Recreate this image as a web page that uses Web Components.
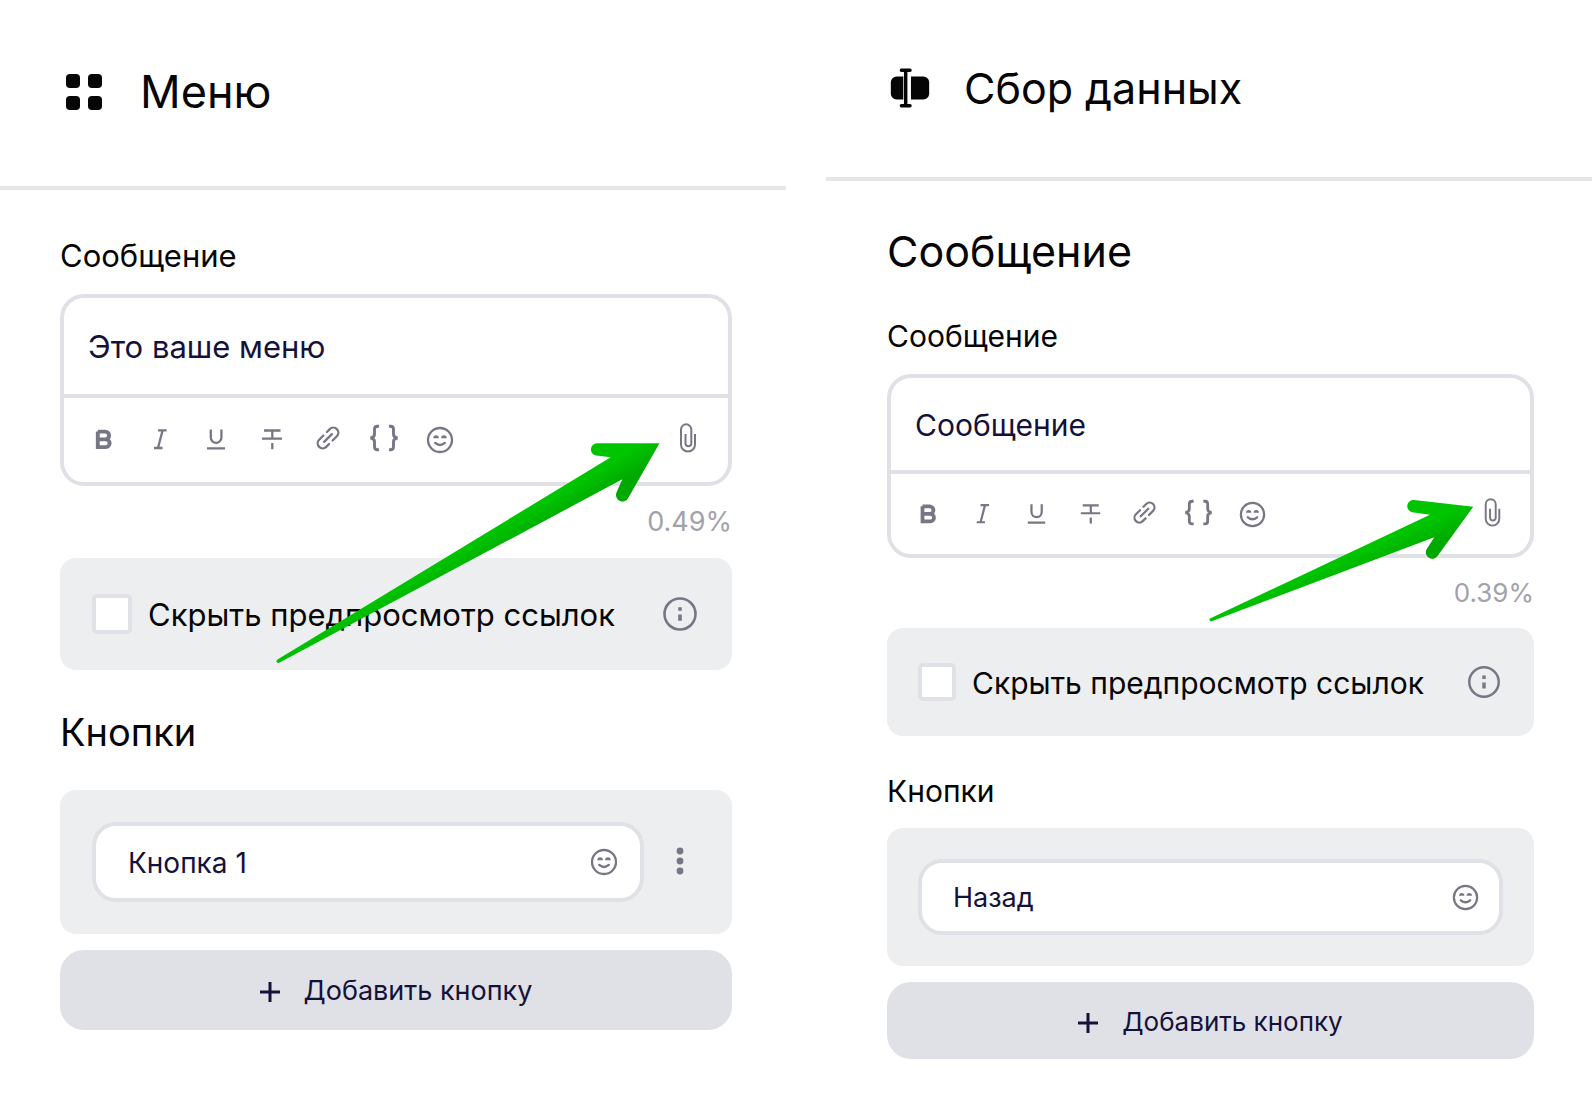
<!DOCTYPE html>
<html lang="ru">
<head>
<meta charset="utf-8">
<title>Редактор блоков</title>
<style>
    body {
        margin: 0;
        background: #fff;
        color: #050505;
        font-family: Inter, "Liberation Sans", sans-serif;
    }
    main {
        display: grid;
        grid-template-columns: 786fr 766fr;
        gap: 40px;
        align-items: start;
    }
    block-panel {
        --ink: #14123a;
        --muted: #777684;
        --line: #e0e1e6;
        --card: #edeef0;
    }
    .menu {
        --header: 186px;
        --title: 45px;
        --icon: 48px;
        --icon-gap: 32px;
        --pad: 46px 54px 68px 60px;
        --pad-left: 60px;
        --label: 31px;
        --label-line: 40px;
        --label-gap: 18px;
        --small: 27px;
        --small-line: 36px;
        --entry: 28px;
        --text-row: 96px;
        --tool-row: 84px;
        --tool: 32px;
        --tool-gap: 24px;
        --tool-pad: 24px;
        --check-card: 112px;
        --box: 40px;
        --card-pad: 32px;
        --field: 80px;
        --field-pad: 20px;
        --button: 80px;
    }
    .collect {
        --header: 177px;
        --title: 43px;
        --icon: 46px;
        --icon-gap: 31px;
        --pad: 42px 58px 39px 61px;
        --pad-left: 61px;
        --label: 30px;
        --label-line: 38px;
        --label-gap: 19px;
        --small: 26px;
        --small-line: 34px;
        --entry: 27px;
        --text-row: 92px;
        --tool-row: 80px;
        --tool: 31px;
        --tool-gap: 23px;
        --tool-pad: 22px;
        --check-card: 108px;
        --box: 38px;
        --card-pad: 31px;
        --field: 76px;
        --field-pad: 18px;
        --button: 77px;
    }
    h2, h3 {
        margin: 0;
        font-weight: 400;
    }
    .menu h2 {
        margin: 38px 0 34px;
        font-size: 38px;
        line-height: 48px;
    }
    .collect h2 {
        margin-bottom: 38px;
        font-size: 43px;
        line-height: 56px;
    }
    .collect h3 {
        margin: 36px 0 18px;
        font-size: 30px;
        line-height: 38px;
    }
    add-button {
        margin-top: 16px;
    }
    .menu pointer-arrow {
        position: absolute;
        top: 132px;
        right: 58px;
    }
    .collect pointer-arrow {
        position: absolute;
        top: 112px;
        right: 44px;
    }
</style>
</head>
<body>
<main>
    <block-panel class="menu" heading="Меню" icon="grid">
        <message-editor label="Сообщение" text="Это ваше меню" percent="0.49%">
            <pointer-arrow shape="long"></pointer-arrow>
        </message-editor>
        <preview-toggle>Скрыть предпросмотр ссылок</preview-toggle>
        <h2>Кнопки</h2>
        <button-field value="Кнопка 1" menu></button-field>
        <add-button>Добавить кнопку</add-button>
    </block-panel>

    <block-panel class="collect" heading="Сбор данных" icon="input">
        <h2>Сообщение</h2>
        <message-editor label="Сообщение" text="Сообщение" percent="0.39%">
            <pointer-arrow shape="short"></pointer-arrow>
        </message-editor>
        <preview-toggle>Скрыть предпросмотр ссылок</preview-toggle>
        <h3>Кнопки</h3>
        <button-field value="Назад"></button-field>
        <add-button>Добавить кнопку</add-button>
    </block-panel>
</main>

<script>
const ICONS = {
    grid: `<g fill="currentColor"><rect x="6" y="6" width="14" height="14" rx="4"/><rect x="28" y="6" width="14" height="14" rx="4"/><rect x="6" y="28" width="14" height="14" rx="4"/><rect x="28" y="28" width="14" height="14" rx="4"/></g>`,
    input: `<path d="M15 5.500h9M15 42.500h9M19.500 5.500v37" stroke="currentColor" stroke-width="3.600" stroke-linecap="round" fill="none"/><path d="M17 12h-7a6 6 0 0 0-6 6v12a6 6 0 0 0 6 6h7zM25 12h13a6 6 0 0 1 6 6v12a6 6 0 0 1-6 6H25z" fill="currentColor"/>`,
    bold: `<path d="M9.800 7.600h7.400a3.900 3.900 0 0 1 0 7.800H9.800M9.800 15.400h8a3.850 3.850 0 0 1 0 7.700h-8V7.600" stroke-width="3.900"/>`,
    italic: `<path d="M14 6.300h8.700M10 24h8.500M18.600 6.300L14 24"/>`,
    underline: `<path d="M10.800 5.500v8a5.200 5.200 0 0 0 10.600 0v-8M7 24.300h18"/>`,
    strike: `<path d="M8 6.500h16.500M6 14.700h20M16.300 6.500v8M16.300 19v6.300"/>`,
    link: `<g transform="translate(16 14) rotate(-45)" stroke-linecap="round"><path d="M-1.500-5h-6a5 5 0 0 0 0 10h4M1.500 5h6a5 5 0 0 0 0-10h-4M-5.500 0h11"/></g>`,
    braces: `<path d="M11 2.300H9.500q-3 0-3 3v5q0 3-4 3.700q4 .7 4 3.700v5q0 3 3 3H11M21 2.300h1.500q3 0 3 3v5q0 3 4 3.700q-4 .7-4 3.700v5q0 3-3 3H21" stroke-width="2.900"/>`,
    smile: `<circle cx="16" cy="16" r="12"/><path d="M11.200 18.900q4.800 4 9.600 0" stroke-linecap="round" stroke-width="2.400"/><path d="M9.300 14.300a2.800 3 0 0 1 5.600 0zM17.100 14.300a2.800 3 0 0 1 5.600 0z" fill="currentColor" stroke="none"/>`,
    clip: `<path d="M23 10v10.500a7 7 0 0 1-14 0V5.500a5.150 5.150 0 0 1 10.300 0V20a3 3 0 0 1-5.800 0V10" stroke-width="2"/>`,
    info: `<circle cx="20" cy="20" r="15.500" stroke-width="2.600"/><path d="M18.200 13.200h3.600v3.600h-3.600zM18.200 20.400h3.600v6.400h-3.600z" fill="currentColor" stroke="none"/>`,
    dots: `<g fill="currentColor" stroke="none"><circle cx="20" cy="9" r="3.400"/><circle cx="20" cy="19" r="3.400"/><circle cx="20" cy="29" r="3.400"/></g>`,
    plus: `<path d="M10 0v20M0 10h20" stroke-width="3"/>`
};

function icon(name, size = 32) {
    return `<svg viewBox="0 0 ${size} ${size}" fill="none" stroke="currentColor" stroke-width="2.300" overflow="visible" aria-hidden="true">${ICONS[name]}</svg>`;
}

const BASE = `
    * { box-sizing: border-box; }
    :host { display: block; }
    svg { display: block; width: 100%; height: 100%; }
    button { padding: 0; border: 0; background: none; font: inherit; color: inherit; cursor: pointer; flex: none; }
    input, textarea { margin: 0; font: inherit; color: inherit; outline: none; }
`;

class BlockPanel extends HTMLElement {
    constructor() {
        super();
        this.attachShadow({ mode: 'open' });
    }

    connectedCallback() {
        this.shadowRoot.innerHTML = `
        <style>
            ${BASE}
            :host { min-width: 0; }
            header {
                display: flex;
                align-items: center;
                gap: var(--icon-gap);
                height: calc(var(--header) + 4px);
                padding: 0 0 2px var(--pad-left);
                border-bottom: 4px solid #e6e6e8;
            }
            .icon {
                width: var(--icon);
                height: var(--icon);
                flex: none;
            }
            .icon svg { stroke: none; }
            h1 {
                margin: 0;
                font-size: var(--title);
                font-weight: 400;
                line-height: 56px;
            }
            section { padding: var(--pad); }
        </style>
        <header>
            <span class="icon">${icon(this.getAttribute('icon'), 48)}</span>
            <h1>${this.getAttribute('heading')}</h1>
        </header>
        <section><slot></slot></section>
        `;
    }
}
customElements.define('block-panel', BlockPanel);

class MessageEditor extends HTMLElement {
    constructor() {
        super();
        this.attachShadow({ mode: 'open' });
    }

    connectedCallback() {
        const tools = [
            ['bold', 'Жирный'],
            ['italic', 'Курсив'],
            ['underline', 'Подчёркнутый'],
            ['strike', 'Зачёркнутый'],
            ['link', 'Ссылка'],
            ['braces', 'Переменная'],
            ['smile', 'Эмодзи'],
            ['clip', 'Вложение']
        ];
        this.shadowRoot.innerHTML = `
        <style>
            ${BASE}
            label {
                display: block;
                margin-bottom: var(--label-gap);
                font-size: var(--label);
                line-height: var(--label-line);
            }
            .editor {
                position: relative;
                border: 4px solid var(--line);
                border-radius: 24px;
            }
            textarea {
                display: block;
                width: 100%;
                height: var(--text-row);
                padding: calc((var(--text-row) - var(--label-line)) / 2 + 1px) 24px 0;
                border: 0;
                background: none;
                color: var(--ink);
                font-size: var(--label);
                line-height: var(--label-line);
                resize: none;
                overflow: hidden;
            }
            .tools {
                display: flex;
                align-items: center;
                gap: var(--tool-gap);
                height: calc(var(--tool-row) + 4px);
                padding: 0 var(--tool-pad);
                border-top: 4px solid var(--line);
                color: var(--muted);
            }
            .tools button {
                width: var(--tool);
                height: var(--tool);
            }
            .tools button:last-child { margin-left: auto; }
            .percent {
                margin: 18px 0;
                color: #a2a2ab;
                font-size: var(--small);
                line-height: var(--small-line);
                text-align: right;
            }
        </style>
        <label for="message">${this.getAttribute('label')}</label>
        <div class="editor">
            <textarea id="message" rows="1">${this.getAttribute('text')}</textarea>
            <div class="tools">
                ${tools.map(([name, title]) => `<button type="button" aria-label="${title}">${icon(name)}</button>`).join('')}
            </div>
            <slot></slot>
        </div>
        <div class="percent">${this.getAttribute('percent')}</div>
        `;
    }
}
customElements.define('message-editor', MessageEditor);

class PreviewToggle extends HTMLElement {
    constructor() {
        super();
        this.attachShadow({ mode: 'open' });
    }

    connectedCallback() {
        this.shadowRoot.innerHTML = `
        <style>
            ${BASE}
            :host {
                border-radius: 16px;
                background: var(--card);
            }
            .row {
                display: flex;
                align-items: center;
                height: var(--check-card);
                padding: 0 var(--card-pad);
            }
            input {
                appearance: none;
                flex: none;
                width: var(--box);
                height: var(--box);
                border: 4px solid var(--line);
                border-radius: 5px;
                background: #fff;
            }
            label {
                flex: 1;
                padding: 2px 0 0 16px;
                font-size: var(--label);
                line-height: var(--label-line);
                white-space: nowrap;
            }
            button {
                width: var(--box);
                height: var(--box);
                color: var(--muted);
            }
        </style>
        <div class="row">
            <input type="checkbox" id="hide">
            <label for="hide"><slot></slot></label>
            <button type="button" aria-label="Справка">${icon('info', 40)}</button>
        </div>
        `;
    }
}
customElements.define('preview-toggle', PreviewToggle);

class ButtonField extends HTMLElement {
    constructor() {
        super();
        this.attachShadow({ mode: 'open' });
    }

    connectedCallback() {
        const more = `<button type="button" class="more" aria-label="Ещё">${icon('dots', 40)}</button>`;
        this.shadowRoot.innerHTML = `
        <style>
            ${BASE}
            :host {
                border-radius: 16px;
                background: var(--card);
            }
            .row {
                display: flex;
                align-items: center;
                gap: 16px;
                padding: var(--card-pad);
            }
            .field {
                display: flex;
                flex: 1;
                align-items: center;
                height: var(--field);
                padding-right: var(--field-pad);
                border: 4px solid var(--line);
                border-radius: 24px;
                background: #fff;
                color: var(--muted);
            }
            input {
                flex: 1;
                min-width: 0;
                padding: 1px 0 0 var(--card-pad);
                border: 0;
                background: none;
                color: var(--ink);
                font-size: var(--entry);
                line-height: var(--small-line);
            }
            .emoji {
                width: var(--tool);
                height: var(--tool);
            }
            .more {
                width: var(--box);
                height: var(--box);
                color: var(--muted);
            }
        </style>
        <div class="row">
            <div class="field">
                <input type="text" aria-label="Текст кнопки" value="${this.getAttribute('value')}">
                <button type="button" class="emoji" aria-label="Эмодзи">${icon('smile')}</button>
            </div>
            ${this.hasAttribute('menu') ? more : ''}
        </div>
        `;
    }
}
customElements.define('button-field', ButtonField);

class AddButton extends HTMLElement {
    constructor() {
        super();
        this.attachShadow({ mode: 'open' });
    }

    connectedCallback() {
        this.shadowRoot.innerHTML = `
        <style>
            ${BASE}
            button {
                display: flex;
                align-items: center;
                justify-content: center;
                gap: 24px;
                width: 100%;
                height: var(--button);
                padding-top: 2px;
                border-radius: 24px;
                background: var(--line);
                color: var(--ink);
                font-size: var(--small);
                line-height: var(--small-line);
            }
            .plus {
                width: 20px;
                height: 20px;
                margin-top: 2px;
            }
        </style>
        <button type="button"><span class="plus">${icon('plus', 20)}</span><span><slot></slot></span></button>
        `;
    }
}
customElements.define('add-button', AddButton);

class PointerArrow extends HTMLElement {
    constructor() {
        super();
        this.attachShadow({ mode: 'open' });
    }

    connectedCallback() {
        const long = this.getAttribute('shape') === 'long';
        const width = long ? 400 : 280;
        const height = long ? 240 : 140;
        const path = long
            ? 'M389.500 13.300H327a6.200 6.200 0 0 0-1 12.300l14.700 1.700L7.500 229.500a1.800 1.800 0 0 0 1.700 3.200L352.300 49.300 346.500 62.500a6.500 6.500 0 0 0 12 5z'
            : 'M267.300 16.700L208 10a6.200 6.200 0 0 0-2 12.200l18 2.600L4.500 128.200a1.600 1.600 0 0 0 1.200 3L228.300 47.300 220.800 59a6.300 6.300 0 0 0 10.900 6.800z';
        const axis = long
            ? 'x1="240" y1="84" x2="257" y2="113"'
            : 'x1="140" y1="60" x2="154" y2="92"';
        this.shadowRoot.innerHTML = `
        <style>
            :host { display: block; pointer-events: none; }
            svg { display: block; }
        </style>
        <svg width="${width}" height="${height}" viewBox="0 0 ${width} ${height}" aria-hidden="true">
            <defs>
                <linearGradient id="green" gradientUnits="userSpaceOnUse" ${axis}>
                    <stop offset="0.200" stop-color="#00c400"/>
                    <stop offset="0.900" stop-color="#00a800"/>
                </linearGradient>
            </defs>
            <path d="${path}" fill="url(#green)"/>
        </svg>
        `;
    }
}
customElements.define('pointer-arrow', PointerArrow);
</script>
</body>
</html>
